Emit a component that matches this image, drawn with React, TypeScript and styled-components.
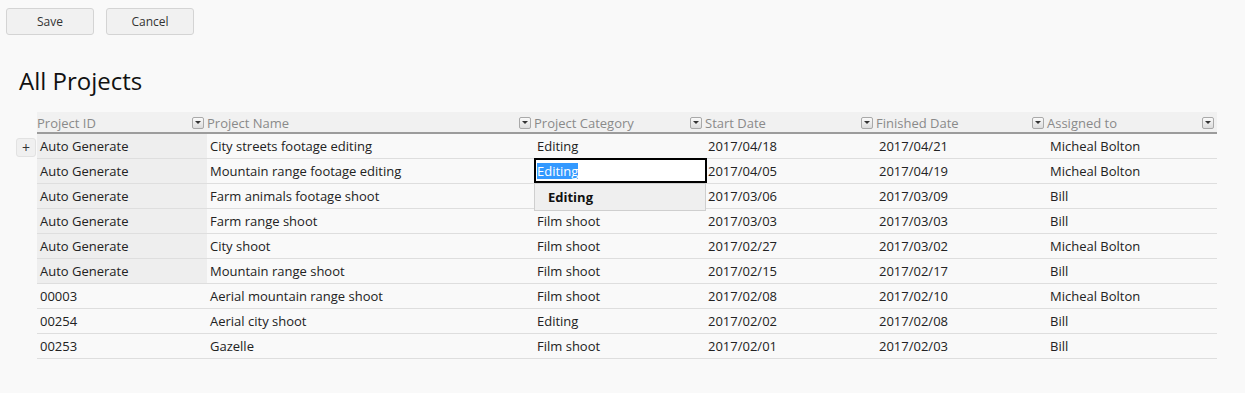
import { createGlobalStyle } from 'styled-components'
import styled from 'styled-components'

type Project = {
  id: string
  name: string
  category: string
  start: string
  finished: string
  assigned: string
}

const projects: Array<Project> = [
  { id: 'Auto Generate', name: 'City streets footage editing', category: 'Editing', start: '2017/04/18', finished: '2017/04/21', assigned: 'Micheal Bolton' },
  { id: 'Auto Generate', name: 'Mountain range footage editing', category: 'Editing', start: '2017/04/05', finished: '2017/04/19', assigned: 'Micheal Bolton' },
  { id: 'Auto Generate', name: 'Farm animals footage shoot', category: 'Film shoot', start: '2017/03/06', finished: '2017/03/09', assigned: 'Bill' },
  { id: 'Auto Generate', name: 'Farm range shoot', category: 'Film shoot', start: '2017/03/03', finished: '2017/03/03', assigned: 'Bill' },
  { id: 'Auto Generate', name: 'City shoot', category: 'Film shoot', start: '2017/02/27', finished: '2017/03/02', assigned: 'Micheal Bolton' },
  { id: 'Auto Generate', name: 'Mountain range shoot', category: 'Film shoot', start: '2017/02/15', finished: '2017/02/17', assigned: 'Bill' },
  { id: '00003', name: 'Aerial mountain range shoot', category: 'Film shoot', start: '2017/02/08', finished: '2017/02/10', assigned: 'Micheal Bolton' },
  { id: '00254', name: 'Aerial city shoot', category: 'Editing', start: '2017/02/02', finished: '2017/02/08', assigned: 'Bill' },
  { id: '00253', name: 'Gazelle', category: 'Film shoot', start: '2017/02/01', finished: '2017/02/03', assigned: 'Bill' },
]

const columns = ['Project ID', 'Project Name', 'Project Category', 'Start Date', 'Finished Date', 'Assigned to']

// row being edited (index), category cell shows the inline editor
const EDIT_ROW = 1

const GlobalStyle = createGlobalStyle`
  body {
    margin: 0;
    background: #f9f9f9;
    font-family: 'Open Sans', 'Noto Sans', sans-serif;
    color: #222;
  }
`

const Page = styled.div`
  width: 1245px;
  height: 393px;
  overflow: hidden;
`

const Toolbar = styled.div`
  display: flex;
  gap: 12px;
  padding: 8px 6px 0;
`

const ToolButton = styled.button`
  width: 88px;
  height: 27px;
  font-family: 'Open Sans', sans-serif;
  font-size: 12px;
  color: #333;
  background: #f1f1f1;
  border: 1px solid #d4d4d4;
  border-radius: 3px;
  padding: 0;
`

const Title = styled.h1`
  margin: 30px 0 15px 19px;
  font-size: 24px;
  line-height: 32px;
  font-weight: 400;
  color: #111;
`

const GridLine = styled.div`
  display: flex;
`

const Gutter = styled.div`
  width: 37px;
  flex: none;
  display: flex;
  justify-content: flex-end;
  align-items: flex-start;
  padding-top: 4px;
  box-sizing: border-box;
`

const AddButton = styled.div`
  width: 20px;
  height: 19px;
  margin-right: 1px;
  border: 1px solid #e2e2e2;
  border-radius: 3px;
  background: #f0f0f0;
  color: #333;
  font-size: 14px;
  line-height: 17px;
  text-align: center;
  box-sizing: border-box;
`

const Row = styled.div<{ $header?: boolean }>`
  display: grid;
  grid-template-columns: 170px 327px 171px 171px 171px 170px;
  width: 1180px;
  height: ${p => (p.$header ? '22px' : '25px')};
  background: ${p => (p.$header ? '#f1f1f1' : 'transparent')};
  border-bottom: ${p => (p.$header ? '2px solid #9c9c9c' : '1px solid #dedede')};
  box-sizing: border-box;
`

const HeadCell = styled.div`
  display: flex;
  align-items: center;
  justify-content: space-between;
  padding-right: 3px;
  padding-top: 1px;
  font-size: 13px;
  color: #8a8a8a;
  white-space: nowrap;
`

const FilterIcon = styled.span`
  width: 12px;
  height: 12px;
  box-sizing: border-box;
  border: 1px solid #a9a9a9;
  border-radius: 2px;
  background: linear-gradient(#fafafa, #dcdcdc);
  display: flex;
  align-items: center;
  justify-content: center;

  &::after {
    content: '';
    border-left: 3px solid transparent;
    border-right: 3px solid transparent;
    border-top: 3px solid #333;
  }
`

const Cell = styled.div<{ $locked?: boolean }>`
  position: relative;
  display: flex;
  align-items: center;
  padding-left: 3px;
  font-size: 13px;
  color: #222;
  white-space: nowrap;
  background: ${p => (p.$locked ? '#eeeeee' : 'transparent')};
`

const Editor = styled.div`
  position: absolute;
  left: 0;
  top: -1px;
  width: 173px;
  height: 25px;
  border: 2px solid #000;
  box-sizing: border-box;
  background: #fff;
  display: flex;
  align-items: center;
  padding-left: 1px;
  z-index: 2;
`

const Selected = styled.span`
  background: #3399ff;
  color: #fff;
  line-height: 16px;
`

const Suggest = styled.div`
  position: absolute;
  left: 0;
  top: 24px;
  width: 172px;
  height: 28px;
  box-sizing: border-box;
  border: 1px solid #cfcfcf;
  background: #efefef;
  font-weight: 700;
  font-size: 13px;
  color: #111;
  padding-left: 13px;
  display: flex;
  align-items: center;
  z-index: 3;
`

const App = () => {
  return (
    <Page>
      <GlobalStyle />
      <Toolbar>
        <ToolButton>Save</ToolButton>
        <ToolButton>Cancel</ToolButton>
      </Toolbar>
      <Title>All Projects</Title>

      <GridLine>
        <Gutter />
        <Row $header>
          {columns.map(col => (
            <HeadCell key={col}>
              <span>{col}</span>
              <FilterIcon />
            </HeadCell>
          ))}
        </Row>
      </GridLine>

      {projects.map((p, idx) => (
        <GridLine key={p.name}>
          <Gutter>{idx === 0 && <AddButton>+</AddButton>}</Gutter>
          <Row>
            <Cell $locked={p.id === 'Auto Generate'}>{p.id}</Cell>
            <Cell>{p.name}</Cell>
            <Cell>
              {idx === EDIT_ROW ? (
                <>
                  <Editor>
                    <Selected>{p.category}</Selected>
                  </Editor>
                  <Suggest>Editing</Suggest>
                </>
              ) : (
                p.category
              )}
            </Cell>
            <Cell>{p.start}</Cell>
            <Cell>{p.finished}</Cell>
            <Cell>{p.assigned}</Cell>
          </Row>
        </GridLine>
      ))}
    </Page>
  )
}

export default App
